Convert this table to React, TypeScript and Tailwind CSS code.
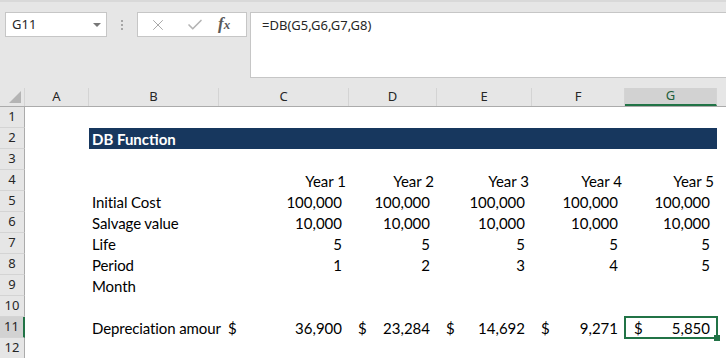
import { Check, X } from 'lucide-react';

// column widths of the sheet, A..G
const colWidth = ['w-[64px]', 'w-[130px]', 'w-[130px]', 'w-[88px]', 'w-[95px]', 'w-[93px]', 'w-[92px]'];
const colNames = ['A', 'B', 'C', 'D', 'E', 'F', 'G'];

type Cell = { text?: string; dollar?: boolean; kind?: 'num' | 'label' | 'head' };

const years = [1, 2, 3, 4, 5];
const num = (v: string): Cell => ({ text: v, kind: 'num' });

const rows: Record<number, Cell[]> = {
  4: [{}, {}, ...years.map((y) => ({ text: `Year ${y}`, kind: 'head' as const }))],
  5: [{}, { text: 'Initial Cost', kind: 'label' }, ...years.map(() => num('100,000'))],
  6: [{}, { text: 'Salvage value', kind: 'label' }, ...years.map(() => num('10,000'))],
  7: [{}, { text: 'Life', kind: 'label' }, ...years.map(() => num('5'))],
  8: [{}, { text: 'Period', kind: 'label' }, ...years.map((y) => num(String(y)))],
  9: [{}, { text: 'Month', kind: 'label' }],
  // label runs into C, which holds a value, so only this much of it shows
  11: [
    {},
    { text: 'Depreciation amour', kind: 'label' },
    ...['36,900', '23,284', '14,692', '9,271', '5,850'].map((v) => ({ text: v, kind: 'num' as const, dollar: true })),
  ],
};

const cellFont = "font-['Lato',_'Liberation_Sans',_sans-serif] text-[15px] text-black";

function SheetCell({ cell, width, selected }: { cell?: Cell; width: string; selected?: boolean }) {
  const base = `${width} h-[21px] shrink-0 relative flex items-end pb-[1px] leading-[18px] whitespace-nowrap ${cellFont}`;
  if (!cell || !cell.text) return <div className={base} />;
  let content;
  if (cell.kind === 'label') {
    content = <span className="pl-[3px] tracking-[-0.1px]">{cell.text}</span>;
  } else if (cell.dollar) {
    content = (
      <div className="flex w-full justify-between pl-[9px] pr-[7px]">
        <span>$</span>
        <span>{cell.text}</span>
      </div>
    );
  } else {
    content = (
      <div className={`w-full text-right ${cell.kind === 'head' ? 'pr-[3px]' : 'pr-[7px]'}`}>{cell.text}</div>
    );
  }
  return (
    <div className={base}>
      {content}
      {selected && (
        <div className="absolute -left-px -top-px -right-px -bottom-px border-2 border-[#217346]">
          {/* fill handle */}
          <div className="absolute -right-[4px] -bottom-[4px] w-[6px] h-[6px] bg-[#217346]" />
        </div>
      )}
    </div>
  );
}

function RowHeader({ n, active }: { n: number; active?: boolean }) {
  return (
    <div
      className={`w-[25px] h-[21px] shrink-0 flex items-center justify-center border-b border-[#d4d4d4] text-[13px] font-['Noto_Sans',_sans-serif] text-[#262626] ${
        active ? 'bg-[#d2d2d2] border-r-2 border-r-[#217346]' : 'bg-[#e6e6e6] border-r border-r-[#ababab]'
      }`}
    >
      {n}
    </div>
  );
}

function FormulaBar() {
  return (
    <div className="h-[88px] bg-[#e6e6e6] border-t-2 border-[#d9d9d9] flex items-start pt-[10px] font-['Noto_Sans',_sans-serif]">
      <div className="ml-[5px] w-[102px] h-[25px] bg-white border border-[#c6c6c6] flex items-center justify-between pl-[6px] pr-[5px] text-[13px] text-[#262626]">
        <span>G11</span>
        <span className="w-0 h-0 border-l-[4px] border-r-[4px] border-t-[4px] border-l-transparent border-r-transparent border-t-[#777]" />
      </div>
      <div className="w-[30px] h-[25px] flex flex-col items-center justify-center gap-[2px]">
        <span className="w-[2px] h-[2px] bg-[#a6a6a6]" />
        <span className="w-[2px] h-[2px] bg-[#a6a6a6]" />
        <span className="w-[2px] h-[2px] bg-[#a6a6a6]" />
      </div>
      <div className="w-[110px] h-[25px] bg-white border border-[#c6c6c6] flex items-center">
        <X className="ml-[11px] w-[18px] h-[18px] text-[#a6a6a6]" strokeWidth={1.3} />
        <Check className="ml-[19px] w-[18px] h-[18px] text-[#b4b4b4]" strokeWidth={2.2} />
        <span className="ml-[14px] -mt-[2px] font-['Liberation_Serif',_serif] italic font-bold text-[17px] text-[#5a5a5a]">
          f<span className="text-[13px]">x</span>
        </span>
      </div>
      <div className="ml-[3px] flex-1 h-[66px] bg-white border border-[#c6c6c6] border-r-0 pl-[11px] pt-[3px] text-[13px] text-[#262626]">
        =DB(G5,G6,G7,G8)
      </div>
    </div>
  );
}

function ColumnHeaders() {
  return (
    <div className="flex h-[19px] bg-[#e6e6e6] border-b border-[#ababab] font-['Noto_Sans',_sans-serif] text-[13px] text-[#262626]">
      <div className="w-[25px] shrink-0 relative border-r border-[#d4d4d4]">
        <svg className="absolute right-[3px] bottom-[3px]" width="12" height="12" viewBox="0 0 12 12">
          <polygon points="12,0 12,12 0,12" fill="#b4b4b4" />
        </svg>
      </div>
      {colNames.map((c, i) => (
        <div
          key={c}
          className={`${colWidth[i]} shrink-0 flex items-center justify-center border-r border-[#d4d4d4] ${
            c === 'G' ? 'bg-[#d2d2d2] border-b-2 border-b-[#217346] text-[#1d5e3a]' : ''
          }`}
        >
          {c}
        </div>
      ))}
      <div className="flex-1" />
    </div>
  );
}

export default function App() {
  return (
    <div className="relative w-[726px] h-[358px] overflow-hidden bg-white">
      <FormulaBar />
      <ColumnHeaders />
      {Array.from({ length: 12 }, (_, r) => r + 1).map((n) => (
        <div key={n} className={`flex ${n === 11 ? 'relative z-10' : ''}`}>
          <RowHeader n={n} active={n === 11} />
          {n === 2 ? (
            <>
              <div className={`${colWidth[0]} h-[21px] shrink-0`} />
              <div className="w-[628px] h-[21px] shrink-0 bg-[#17375e] flex items-end pb-[1px] pl-[3px] leading-[18px] font-['Lato',_sans-serif] font-bold text-[15px] text-white">
                DB Function
              </div>
            </>
          ) : (
            colWidth.map((w, i) => (
              <SheetCell key={i} width={w} cell={rows[n]?.[i]} selected={n === 11 && i === 6} />
            ))
          )}
        </div>
      ))}
    </div>
  );
}
